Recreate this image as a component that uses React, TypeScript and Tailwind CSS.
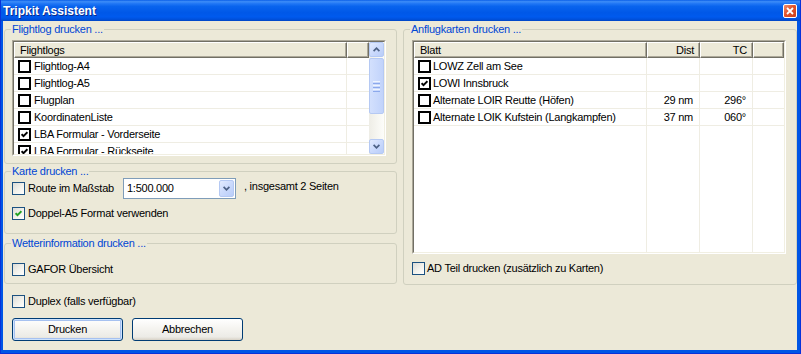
import React from "react";

type Row = { checked?: boolean; text: string; dist?: string; tc?: string };

const FLIGHTLOGS: Row[] = [
  { text: "Flightlog-A4" },
  { text: "Flightlog-A5" },
  { text: "Flugplan" },
  { text: "KoordinatenListe" },
  { text: "LBA Formular - Vorderseite", checked: true },
  { text: "LBA Formular - Rückseite", checked: true },
];

const CHARTS: Row[] = [
  { text: "LOWZ Zell am See" },
  { text: "LOWI Innsbruck", checked: true },
  { text: "Alternate LOIR Reutte (Höfen)", dist: "29 nm", tc: "296°" },
  { text: "Alternate LOIK Kufstein (Langkampfen)", dist: "37 nm", tc: "060°" },
];

function XPCheck({ checked }: { checked?: boolean }) {
  return (
    <span className="flex h-[13px] w-[13px] shrink-0 items-center justify-center border border-[#1C5180] bg-[linear-gradient(135deg,#DCDCD7_0%,#F3F2EC_55%,#FFFFFF_100%)]">
      {checked && (
        <svg width="7" height="7" viewBox="0 0 7 7">
          <path d="M0.6 3.2 L2.5 5.2 L6.4 1.2" fill="none" stroke="#21A121" strokeWidth="1.9" />
        </svg>
      )}
    </span>
  );
}

function LvCheck({ checked }: { checked?: boolean }) {
  return (
    <span className="flex h-[13px] w-[13px] shrink-0 items-center justify-center border-2 border-black bg-white">
      {checked && (
        <svg width="7" height="7" viewBox="0 0 7 7">
          <path d="M0.6 3.2 L2.5 5.2 L6.4 1.2" fill="none" stroke="#000" strokeWidth="1.9" />
        </svg>
      )}
    </span>
  );
}

function Chevron({ up }: { up?: boolean }) {
  return (
    <svg width="7" height="5" viewBox="0 0 7 5">
      <path
        d={up ? "M0.6 4.2 L3.5 1.2 L6.4 4.2" : "M0.6 0.8 L3.5 3.8 L6.4 0.8"}
        fill="none"
        stroke="#4D6185"
        strokeWidth="1.7"
      />
    </svg>
  );
}

function BlueButton({ up, className }: { up?: boolean; className: string }) {
  return (
    <div
      className={`flex shrink-0 items-center justify-center rounded-[2px] border border-[#B5C9F3] bg-[linear-gradient(135deg,#E3EBFE_0%,#CBDAFC_50%,#B9CDF9_100%)] ${className}`}
    >
      <Chevron up={up} />
    </div>
  );
}

function GroupBox({
  title,
  className,
  children,
}: {
  title: string;
  className: string;
  children: React.ReactNode;
}) {
  return (
    <fieldset className={`rounded-[3px] border border-[#D0D0BF] ${className}`}>
      <legend className="ml-[6px] px-[1px] leading-[13px] text-[#0046D5]">{title}</legend>
      {children}
    </fieldset>
  );
}

function Sunken({ className, children }: { className: string; children: React.ReactNode }) {
  return (
    <div className={`border border-t-[#ACA899] border-l-[#ACA899] border-b-white border-r-white ${className}`}>
      <div className="flex h-full overflow-hidden border border-t-[#716F64] border-l-[#716F64] border-b-[#F1EFE2] border-r-[#F1EFE2] bg-white">
        {children}
      </div>
    </div>
  );
}

function HeaderCell({ className, right, children }: { className: string; right?: boolean; children?: React.ReactNode }) {
  return (
    <div
      className={`flex h-full items-center border border-t-white border-l-white border-b-[#716F64] border-r-[#716F64] bg-[#ECE9D8] shadow-[inset_-1px_-1px_0_#ACA899] ${
        right ? "justify-end pr-[5px]" : "pl-[5px]"
      } ${className}`}
    >
      {children}
    </div>
  );
}

function ScrollBar() {
  return (
    <div className="flex w-[15px] shrink-0 flex-col bg-[linear-gradient(to_right,#EEEDE6,#FDFDFA)]">
      <BlueButton up className="h-[15px] w-[15px]" />
      <div className="mt-[1px] flex h-[56px] flex-col items-center justify-center gap-[1px] rounded-[2px] border border-[#B5C9F3] bg-[linear-gradient(to_right,#D3E0FD,#C1D3FB)]">
        <span className="h-[1px] w-[7px] bg-[#EEF4FE]" />
        <span className="h-[1px] w-[7px] bg-[#8CA9EC]" />
        <span className="h-[1px] w-[7px] bg-[#EEF4FE]" />
        <span className="h-[1px] w-[7px] bg-[#8CA9EC]" />
        <span className="h-[1px] w-[7px] bg-[#EEF4FE]" />
        <span className="h-[1px] w-[7px] bg-[#8CA9EC]" />
      </div>
      <div className="flex-1" />
      <BlueButton className="h-[15px] w-[15px]" />
    </div>
  );
}

function FlightlogList() {
  return (
    <Sunken className="h-[116px] w-[374px]">
      <div className="flex min-w-0 flex-1 flex-col">
        <div className="flex h-[16px] shrink-0">
          <HeaderCell className="w-[333px]">Flightlogs</HeaderCell>
          <HeaderCell className="flex-1" />
        </div>
        {FLIGHTLOGS.map((r) => (
          <div key={r.text} className="flex h-[17px] shrink-0 border-b border-[#EFEDE3]">
            <div className="flex w-[333px] items-center border-r border-[#EFEDE3] pl-[4px]">
              <LvCheck checked={r.checked} />
              <span className="ml-[3px]">{r.text}</span>
            </div>
            <div className="flex-1" />
          </div>
        ))}
      </div>
      <ScrollBar />
    </Sunken>
  );
}

function ChartList() {
  return (
    <Sunken className="h-[214px] w-[374px]">
      <div className="flex min-w-0 flex-1 flex-col">
        <div className="flex h-[16px] shrink-0">
          <HeaderCell className="w-[233px]">Blatt</HeaderCell>
          <HeaderCell right className="w-[53px]">Dist</HeaderCell>
          <HeaderCell right className="w-[53px]">TC</HeaderCell>
          <HeaderCell className="flex-1" />
        </div>
        {CHARTS.map((r) => (
          <div key={r.text} className="flex h-[17px] shrink-0 border-b border-[#EFEDE3]">
            <div className="flex w-[233px] items-center border-r border-[#EFEDE3] pl-[4px]">
              <LvCheck checked={r.checked} />
              <span className="ml-[2px]">{r.text}</span>
            </div>
            <div className="flex w-[53px] items-center justify-end border-r border-[#EFEDE3] pr-[6px]">{r.dist}</div>
            <div className="flex w-[53px] items-center justify-end border-r border-[#EFEDE3] pr-[6px]">{r.tc}</div>
            <div className="flex-1" />
          </div>
        ))}
        <div className="flex flex-1">
          <div className="w-[233px] border-r border-[#EFEDE3]" />
          <div className="w-[53px] border-r border-[#EFEDE3]" />
          <div className="w-[53px] border-r border-[#EFEDE3]" />
        </div>
      </div>
    </Sunken>
  );
}

function XPButton({ children, isDefault }: { children: React.ReactNode; isDefault?: boolean }) {
  return (
    <div
      className={`flex h-[23px] w-[111px] items-center justify-center rounded-[3px] border border-[#003C74] bg-[linear-gradient(to_bottom,#FFFFFF_0%,#F5F4F0_45%,#ECEBE6_85%,#D8D2C6_100%)] ${
        isDefault ? "shadow-[inset_0_0_0_1px_#CEE3FD,inset_0_0_0_2px_#A6C1F0]" : ""
      }`}
    >
      {children}
    </div>
  );
}

export default function App() {
  return (
    <div className="flex h-[354px] w-[801px] flex-col border-x border-b border-[#0831D9] bg-[#0055E5] font-['Liberation_Sans',Arial,sans-serif] text-[11px] leading-[13px] tracking-[-0.25px] text-black">
      {/* caption */}
      <div className="flex h-[21px] shrink-0 items-center justify-between bg-[linear-gradient(to_bottom,#0A5FE8_0%,#3D8DF8_8%,#2379F5_16%,#0964EE_30%,#0058E8_60%,#005AEE_80%,#0050DC_92%,#0046C4_100%)] pl-[2px]">
        <span className="pt-[2px] text-[12px] font-bold tracking-normal text-white [text-shadow:1px_1px_0_#0A2A8E]">
          Tripkit Assistent
        </span>
        <div className="mr-[3px] flex h-[14px] w-[14px] items-center justify-center rounded-[2px] border border-white bg-[linear-gradient(135deg,#F0906E_0%,#E2552E_45%,#C9401C_100%)]">
          <svg width="8" height="8" viewBox="0 0 8 8">
            <path d="M1 1 L7 7 M7 1 L1 7" stroke="#fff" strokeWidth="1.8" />
          </svg>
        </div>
      </div>

      {/* client area */}
      <div className="ml-[2px] mr-[3px] flex h-[329px] shrink-0 gap-[6px] bg-[#ECE9D8] pl-[1px] pt-[2px]">
        <div className="flex w-[393px] shrink-0 flex-col">
          <GroupBox title="Flightlog drucken ..." className="h-[141px]">
            <div className="pl-[7px] pt-[4px]">
              <FlightlogList />
            </div>
          </GroupBox>

          <GroupBox title="Karte drucken ..." className="mt-[1px] h-[69px]">
            <div className="flex h-[21px] items-center pl-[7px]">
              <div className="flex w-[111px] items-center">
                <XPCheck />
                <span className="ml-[3px]">Route im Maßstab</span>
              </div>
              <div className="flex h-[21px] w-[113px] items-center border border-[#7F9DB9] bg-white pl-[3px] pr-[1px]">
                <span className="flex-1">1:500.000</span>
                <BlueButton className="h-[17px] w-[15px]" />
              </div>
              <span className="mb-[4px] ml-[8px]">, insgesamt 2 Seiten</span>
            </div>
            <div className="mt-[4px] flex h-[21px] items-center pl-[7px]">
              <XPCheck checked />
              <span className="ml-[3px]">Doppel-A5 Format verwenden</span>
            </div>
          </GroupBox>

          <GroupBox title="Wetterinformation drucken ..." className="mt-[3px] h-[47px]">
            <div className="mt-[9px] flex h-[21px] items-center pl-[7px]">
              <XPCheck />
              <span className="ml-[3px]">GAFOR Übersicht</span>
            </div>
          </GroupBox>

          <div className="mt-[7px] flex h-[21px] items-center pl-[8px]">
            <XPCheck />
            <span className="ml-[3px]">Duplex (falls verfügbar)</span>
          </div>

          <div className="mt-[6px] flex gap-[9px] pl-[8px]">
            <XPButton isDefault>Drucken</XPButton>
            <XPButton>Abbrechen</XPButton>
          </div>
        </div>

        <div className="flex w-[394px] shrink-0 flex-col">
          <GroupBox title="Anflugkarten drucken ..." className="h-[262px]">
            <div className="pl-[8px] pt-[4px]">
              <ChartList />
            </div>
            <div className="mt-[4px] flex h-[21px] items-center pl-[8px]">
              <XPCheck />
              <span className="ml-[2px]">AD Teil drucken (zusätzlich zu Karten)</span>
            </div>
          </GroupBox>
        </div>
      </div>
    </div>
  );
}
